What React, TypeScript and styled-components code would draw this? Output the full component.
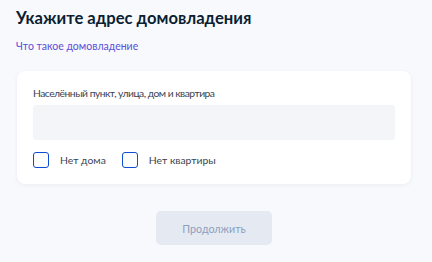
import React, { useState } from "react";
import styled, { createGlobalStyle } from "styled-components";

const GlobalStyle = createGlobalStyle`
  html, body {
    margin: 0;
    padding: 0;
    background: #f8f9fd;
  }
  body {
    font-family: Lato, "Noto Sans", sans-serif;
    color: #0b1f33;
  }
`;

const Page = styled.div`
  display: flex;
  flex-direction: column;
  width: 394px;
  padding: 4px 0 0 17px;
`;

const Title = styled.h1`
  margin: 0 0 0 -1px;
  font-size: 16.6px;
  line-height: 28px;
  font-weight: 700;
  color: #0b1f33;
`;

const HelpLink = styled.a`
  margin: 6px 0 0 -1px;
  font-size: 10.5px;
  line-height: 16px;
  color: #5a4fd8;
  text-decoration: none;
  cursor: pointer;
`;

const Card = styled.div`
  display: flex;
  flex-direction: column;
  margin-top: 17px;
  padding: 14px 16px 16px;
  background: #ffffff;
  border-radius: 8px;
  box-shadow: 0 1px 4px rgba(11, 31, 51, 0.06);
`;

const Label = styled.label`
  font-size: 10.3px;
  letter-spacing: -0.5px;
  line-height: 16px;
  color: #3a4453;
`;

const Input = styled.input`
  margin-top: 4px;
  height: 35px;
  box-sizing: border-box;
  border: none;
  border-radius: 3px;
  background: #f4f5f9;
  outline: none;
  padding: 0 12px;
  font: inherit;
  font-size: 12px;
`;

const Options = styled.div`
  display: flex;
  gap: 16px;
  margin-top: 12px;
`;

const Option = styled.label`
  display: flex;
  align-items: center;
  gap: 11px;
  font-size: 10.4px;
  line-height: 16px;
  color: #3a4453;
  cursor: pointer;
`;

const Box = styled.span<{ $checked: boolean }>`
  width: 16px;
  height: 16px;
  box-sizing: border-box;
  border: 1.5px solid #0d4cd3;
  border-radius: 3px;
  background: ${(p) => (p.$checked ? "#0d4cd3" : "#ffffff")};
`;

const Footer = styled.div`
  display: flex;
  justify-content: center;
  margin-top: 27px;
`;

const Button = styled.button`
  width: 116px;
  height: 34px;
  border: none;
  border-radius: 5px;
  background: #e4e9f2;
  color: #8d9fbd;
  font-family: Lato, "Noto Sans", sans-serif;
  font-size: 10.7px;
`;

const App: React.FC = () => {
  const [noHouse, setNoHouse] = useState(false);
  const [noFlat, setNoFlat] = useState(false);

  return (
    <>
      <GlobalStyle />
      <Page>
        <Title>Укажите адрес домовладения</Title>
        <HelpLink>Что такое домовладение</HelpLink>
        <Card>
          <Label>Населённый пункт, улица, дом и квартира</Label>
          <Input />
          <Options>
            <Option onClick={() => setNoHouse(!noHouse)}>
              <Box $checked={noHouse} />
              Нет дома
            </Option>
            <Option onClick={() => setNoFlat(!noFlat)}>
              <Box $checked={noFlat} />
              Нет квартиры
            </Option>
          </Options>
        </Card>
        <Footer>
          <Button disabled>Продолжить</Button>
        </Footer>
      </Page>
    </>
  );
};

export default App;
